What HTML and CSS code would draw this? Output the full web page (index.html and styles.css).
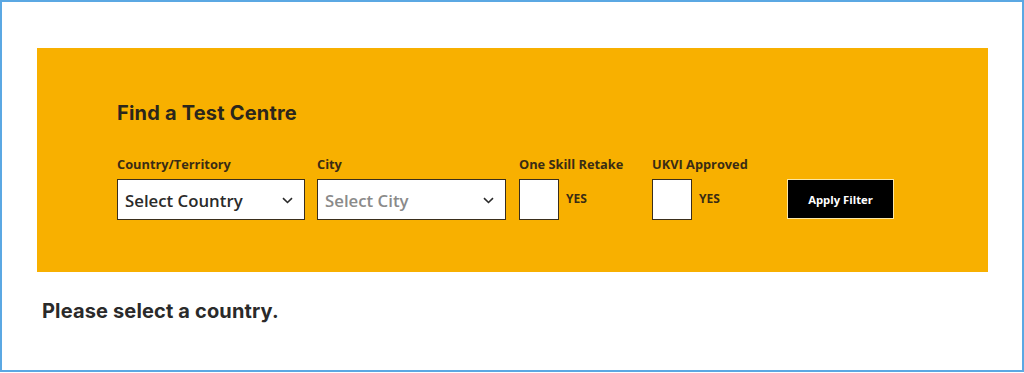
FILE: index.html
```html
<!DOCTYPE html>
<html lang="en">
<head>
<meta charset="utf-8">
<title>Find a Test Centre</title>
<link rel="stylesheet" href="styles.css">
</head>
<body>
<div class="frame">
  <section class="finder">
    <h2 class="finder-title">Find a Test Centre</h2>
    <div class="filters">
      <div class="field field-country">
        <label class="field-label">Country/Territory</label>
        <div class="select">
          <span class="select-text">Select Country</span>
          <svg class="chev" width="11" height="7" viewBox="0 0 11 7"><path d="M1 1.2 L5.5 5.5 L10 1.2" fill="none" stroke="#2a2a2a" stroke-width="1.6"/></svg>
        </div>
      </div>
      <div class="field field-city">
        <label class="field-label">City</label>
        <div class="select">
          <span class="select-text placeholder">Select City</span>
          <svg class="chev" width="11" height="7" viewBox="0 0 11 7"><path d="M1 1.2 L5.5 5.5 L10 1.2" fill="none" stroke="#2a2a2a" stroke-width="1.6"/></svg>
        </div>
      </div>
      <div class="field field-retake">
        <label class="field-label">One Skill Retake</label>
        <div class="check-row">
          <span class="checkbox"></span>
          <span class="check-text">YES</span>
        </div>
      </div>
      <div class="field field-ukvi">
        <label class="field-label">UKVI Approved</label>
        <div class="check-row">
          <span class="checkbox"></span>
          <span class="check-text">YES</span>
        </div>
      </div>
      <div class="field field-btn">
        <button class="apply">Apply Filter</button>
      </div>
    </div>
  </section>
  <p class="message">Please select a country.</p>
</div>
</body>
</html>
```

FILE: styles.css
```css
html, body {
  margin: 0;
  padding: 0;
  background: #ffffff;
}
.frame {
  box-sizing: border-box;
  width: 1024px;
  height: 372px;
  border: 2px solid #5ba8e3;
  padding: 46px 34px 0 35px;
  background: #fff;
}
.finder {
  background: #f8b000;
  height: 224px;
  box-sizing: border-box;
  padding: 53px 0 0 80px;
}
.finder-title {
  margin: 0;
  font-family: Inter, "Open Sans", sans-serif;
  font-weight: 700;
  font-size: 20px;
  line-height: 24px;
  color: #2b261c;
  letter-spacing: 0.2px;
}
.filters {
  display: flex;
  align-items: flex-end;
  margin-top: 30px;
}
.field {
  display: flex;
  flex-direction: column;
}
.field-label {
  font-family: "Open Sans", sans-serif;
  font-weight: 700;
  font-size: 12.8px;
  line-height: 18px;
  color: #3a2c14;
  margin-bottom: 6px;
  white-space: nowrap;
}
.field-country { width: 188px; margin-right: 12px; }
.field-city { width: 189px; margin-right: 13px; }
.field-retake { width: 133px; }
.field-ukvi { width: 135px; }
.select {
  box-sizing: border-box;
  height: 41px;
  border: 1.5px solid #3a2e1c;
  background: #fff;
  display: flex;
  align-items: center;
  justify-content: space-between;
  padding: 0 11px 0 7px;
}
.select-text {
  font-family: "Open Sans", sans-serif;
  font-weight: 600;
  font-size: 16.8px;
  color: #2a2a2a;
  padding-top: 1px;
}
.select-text.placeholder {
  color: #8a8a8a;
}
.chev { display: block; margin-top: 1px; }
.check-row {
  display: flex;
  align-items: center;
  height: 41px;
}
.checkbox {
  box-sizing: border-box;
  width: 40px;
  height: 41px;
  border: 1.5px solid #3a2e1c;
  background: #fff;
  display: block;
}
.check-text {
  font-family: "Open Sans", sans-serif;
  font-weight: 700;
  font-size: 12px;
  color: #3a2c14;
  margin-left: 7px;
  margin-top: -2px;
}
.apply {
  box-sizing: border-box;
  width: 107px;
  height: 40px;
  background: #000;
  border: 1.5px solid #fbe7a6;
  color: #fff;
  font-family: "Open Sans", sans-serif;
  font-weight: 700;
  font-size: 11.3px;
  padding: 0;
  margin-left: 0;
  margin-bottom: 1px;
  cursor: pointer;
}
.message {
  margin: 27px 0 0 5px;
  font-family: Inter, "Open Sans", sans-serif;
  font-weight: 700;
  font-size: 20px;
  line-height: 24px;
  color: #2a2a2a;
  letter-spacing: 0.15px;
}
```
